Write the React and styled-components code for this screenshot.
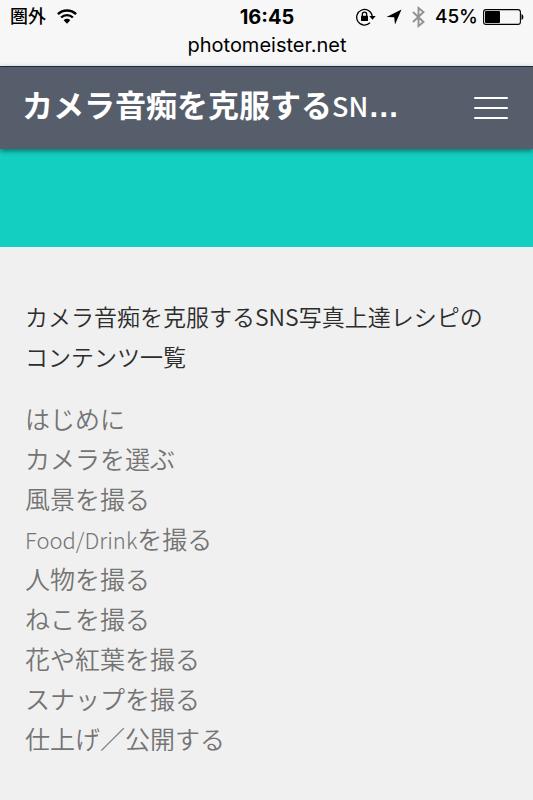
import React from 'react';
import styled, { createGlobalStyle } from 'styled-components';

const GlobalStyle = createGlobalStyle`
  body {
    margin: 0;
    background-color: #f0f0f0;
    font-family: 'Noto Sans CJK JP', sans-serif;
  }
`;

const StatusBar = styled.div`
  background-color: #f7f7f7;
  padding: 5px 9px 5px 10px;
  color: #000000;
`;

const StatusRow = styled.div`
  display: grid;
  grid-template-columns: 1fr auto 1fr;
  align-items: center;
  height: 24px;
  font-family: Inter, 'Noto Sans CJK JP', sans-serif;
  font-size: 19px;
  line-height: 24px;

  svg {
    flex: none;
  }
`;

const StatusGroup = styled.div`
  display: flex;
  align-items: center;
  justify-content: ${props => props.$end ? 'flex-end' : 'flex-start'};
  gap: ${props => props.$end ? '10px' : '11px'};
`;

const Battery = styled.span`
  display: flex;
  align-items: center;
  gap: 5px;
  font-weight: 500;
`;

const Carrier = styled.span`
  font-size: 18px;
  font-weight: 500;
`;

const Clock = styled.span`
  font-size: 20px;
  font-weight: 700;
`;

const Address = styled.div`
  font-family: Inter, sans-serif;
  font-size: 20px;
  line-height: 32px;
  text-align: center;
`;

const Header = styled.header`
  position: relative;
  display: flex;
  align-items: center;
  justify-content: space-between;
  box-sizing: border-box;
  min-height: 83px;
  padding: 0 24px 0 22px;
  background-color: #575e6b;
  border-top: 1px solid #1c2f42;
  box-shadow: 0 2px 5px rgba(0, 0, 0, 0.45);
`;

const Title = styled.h1`
  margin: 0;
  padding-bottom: 6px;
  white-space: nowrap;
  font-size: 31px;
  line-height: 44px;
  font-weight: 700;
  color: #ffffff;
`;

const TitleLatin = styled.span`
  font-size: 27px;
  font-weight: 500;
`;

const Ellipsis = styled.span`
  font-family: 'Liberation Sans', sans-serif;
`;

const MenuButton = styled.button`
  padding: 0;
  border: 0;
  background: none;
  color: #ffffff;
  line-height: 0;
`;

const Hero = styled.div`
  height: 98px;
  background-color: #13cfc2;
`;

const Main = styled.main`
  padding: 49px 25px 36px;
`;

const Heading = styled.h2`
  margin: 0 0 22px;
  font-size: 23px;
  line-height: 40px;
  font-weight: 350;
  color: #2c2c2c;
`;

const List = styled.ul`
  margin: 0;
  padding: 0;
  list-style: none;
  font-size: 25px;
  line-height: 40px;
`;

const ListLink = styled.a`
  font-weight: 350;
  color: #747474;
  text-decoration: none;
`;

const ListLatin = styled.span`
  font-size: 22px;
  line-height: 1;
  font-weight: 300;
`;

const contents = [
  { label: 'はじめに' },
  { label: 'カメラを選ぶ' },
  { label: '風景を撮る' },
  { latin: 'Food/Drink', label: 'を撮る' },
  { label: '人物を撮る' },
  { label: 'ねこを撮る' },
  { label: '花や紅葉を撮る' },
  { label: 'スナップを撮る' },
  { label: '仕上げ／公開する' },
];

function WifiIcon() {
  return (
    <svg width="20" height="16" viewBox="0 0 20 16" fill="none" stroke="#000" strokeWidth="2.4">
      <path d="M.9 5.2a12.9 12.9 0 0 1 18.2 0M4.1 8.5a8.4 8.4 0 0 1 11.8 0" />
      <path d="M6.7 11.2a4.7 4.7 0 0 1 6.6 0L10 14.7z" fill="#000" stroke="none" />
    </svg>
  );
}

function RotationLockIcon() {
  return (
    <svg width="20" height="18" viewBox="0 0 20 18" fill="none" stroke="#000" strokeWidth="1.3">
      <path d="M16.2 8A7.8 7.8 0 1 0 14 14.8" />
      <path d="M13.3 8.1h6.4l-3.2 3.6z" fill="#000" stroke="none" />
      <path d="M6.3 8V6.3a2.2 2.2 0 0 1 4.4 0V8" />
      <rect x="5" y="7.8" width="7" height="5.2" rx=".6" fill="#000" stroke="none" />
    </svg>
  );
}

function LocationIcon() {
  return (
    <svg width="16" height="16" viewBox="0 0 16 16">
      <path d="M15.5.5 9 15.5 8.2 8.2.5 8z" fill="#000" />
    </svg>
  );
}

function BluetoothIcon() {
  return (
    <svg width="13" height="22" viewBox="0 0 13 22" fill="none" stroke="#929292" strokeWidth="1.9">
      <path d="M1 6l10.5 10L6.5 20V2L11.5 6 1 16" />
    </svg>
  );
}

function BatteryIcon() {
  return (
    <svg width="41" height="16" viewBox="0 0 41 16">
      <rect x=".6" y=".6" width="36.8" height="14.8" rx="2.4" fill="none" stroke="#000" strokeWidth="1.1" />
      <rect x="2" y="2" width="15" height="12" rx="1" fill="#000" />
      <path d="M38.5 5c2.5.8 2.5 5.2 0 6z" fill="#000" />
    </svg>
  );
}

function App() {
  return (
    <>
      <GlobalStyle />
      <StatusBar>
        <StatusRow>
          <StatusGroup>
            <Carrier>圏外</Carrier>
            <WifiIcon />
          </StatusGroup>
          <Clock>16:45</Clock>
          <StatusGroup $end>
            <RotationLockIcon />
            <LocationIcon />
            <BluetoothIcon />
            <Battery>
              45%
              <BatteryIcon />
            </Battery>
          </StatusGroup>
        </StatusRow>
        <Address>photomeister.net</Address>
      </StatusBar>
      <Header>
        <Title>
          カメラ音痴を克服する<TitleLatin>SN</TitleLatin><Ellipsis>…</Ellipsis>
        </Title>
        <MenuButton type="button" aria-label="Menu">
          <svg width="35" height="24" viewBox="0 0 35 24" stroke="currentColor" strokeWidth="2" strokeLinecap="round">
            <path d="M1 2h32M1 12h32M1 22h32" />
          </svg>
        </MenuButton>
      </Header>
      <Hero />
      <Main>
        <Heading>
          カメラ音痴を克服するSNS写真上達レシピの
          <br />
          コンテンツ一覧
        </Heading>
        <List>
          {contents.map(item => (
            <li key={item.label + (item.latin || '')}>
              <ListLink href="#">
                {item.latin && <ListLatin>{item.latin}</ListLatin>}
                {item.label}
              </ListLink>
            </li>
          ))}
        </List>
      </Main>
    </>
  );
}

export default App;
